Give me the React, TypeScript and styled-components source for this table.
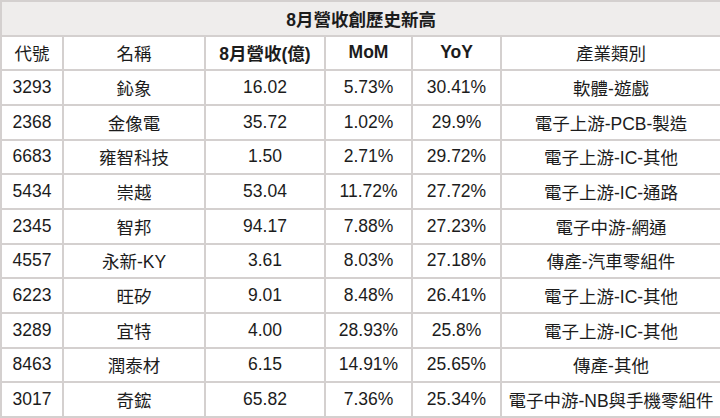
import React from "react";
import styled, { createGlobalStyle } from "styled-components";

const GlobalStyle = createGlobalStyle`
  html, body {
    margin: 0;
    padding: 0;
    background: #ffffff;
  }
  body {
    font-family: "Liberation Sans", "Noto Sans CJK TC", Arial, sans-serif;
  }
`;

type Row = {
  code: string;
  name: string;
  revenue: string;
  mom: string;
  yoy: string;
  industry: string;
};

const rows: Row[] = [
  { code: "3293", name: "鈊象", revenue: "16.02", mom: "5.73%", yoy: "30.41%", industry: "軟體-遊戲" },
  { code: "2368", name: "金像電", revenue: "35.72", mom: "1.02%", yoy: "29.9%", industry: "電子上游-PCB-製造" },
  { code: "6683", name: "雍智科技", revenue: "1.50", mom: "2.71%", yoy: "29.72%", industry: "電子上游-IC-其他" },
  { code: "5434", name: "崇越", revenue: "53.04", mom: "11.72%", yoy: "27.72%", industry: "電子上游-IC-通路" },
  { code: "2345", name: "智邦", revenue: "94.17", mom: "7.88%", yoy: "27.23%", industry: "電子中游-網通" },
  { code: "4557", name: "永新-KY", revenue: "3.61", mom: "8.03%", yoy: "27.18%", industry: "傳產-汽車零組件" },
  { code: "6223", name: "旺矽", revenue: "9.01", mom: "8.48%", yoy: "26.41%", industry: "電子上游-IC-其他" },
  { code: "3289", name: "宜特", revenue: "4.00", mom: "28.93%", yoy: "25.8%", industry: "電子上游-IC-其他" },
  { code: "8463", name: "潤泰材", revenue: "6.15", mom: "14.91%", yoy: "25.65%", industry: "傳產-其他" },
  { code: "3017", name: "奇鋐", revenue: "65.82", mom: "7.36%", yoy: "25.34%", industry: "電子中游-NB與手機零組件" },
];

const colWidths = [62, 142, 120, 87, 89, 220];

const App = () => {
  return (
    <>
      <GlobalStyle />
      <Table>
        <colgroup>
          {colWidths.map((w, i) => (
            <col key={i} style={{ width: w }} />
          ))}
        </colgroup>
        <tbody>
          <tr>
            <TitleCell colSpan={6}>8月營收創歷史新高</TitleCell>
          </tr>
          <tr>
            <HeadCell>代號</HeadCell>
            <HeadCell>名稱</HeadCell>
            <HeadCell $bold>8月營收(億)</HeadCell>
            <HeadCell $bold>MoM</HeadCell>
            <HeadCell $bold>YoY</HeadCell>
            <HeadCell>產業類別</HeadCell>
          </tr>
          {rows.map((r) => (
            <tr key={r.code}>
              <Cell>{r.code}</Cell>
              <Cell>{r.name}</Cell>
              <Cell>{r.revenue}</Cell>
              <Cell>{r.mom}</Cell>
              <Cell>{r.yoy}</Cell>
              <Cell>{r.industry}</Cell>
            </tr>
          ))}
        </tbody>
      </Table>
    </>
  );
};
export default App;

const Table = styled.table`
  width: 720px;
  height: 418px;
  table-layout: fixed;
  border-collapse: collapse;
  border: 2px solid #d4d0cf;
  color: #1c1c1c;
  font-size: 17.5px;
`;

const Cell = styled.td`
  border: 2px solid #d4d0cf;
  text-align: center;
  vertical-align: middle;
  padding: 0;
  white-space: nowrap;
  font-weight: 400;
`;

const HeadCell = styled(Cell)<{ $bold?: boolean }>`
  font-weight: ${(p) => (p.$bold ? 700 : 400)};
`;

const TitleCell = styled(Cell)`
  background: #efedec;
  font-weight: 700;
`;
